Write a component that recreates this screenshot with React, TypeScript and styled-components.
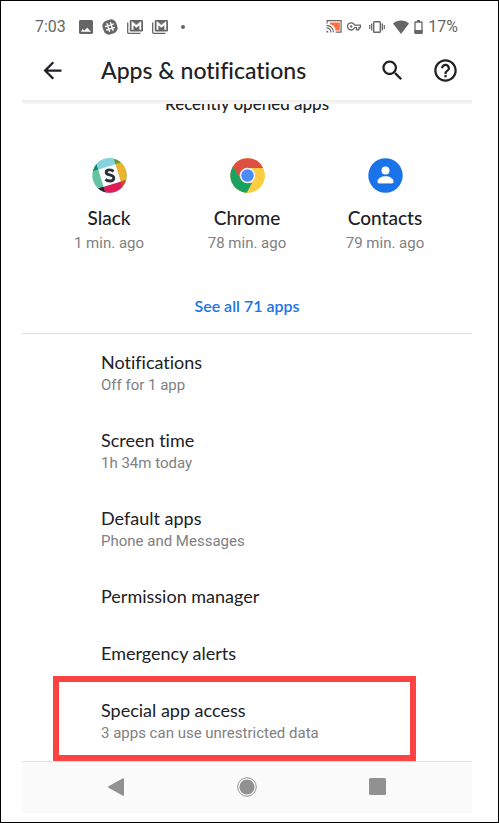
import React from "react";
import styled, { createGlobalStyle } from "styled-components";

const GlobalStyle = createGlobalStyle`
  * { box-sizing: border-box; }
  body { margin: 0; background: #fff; }
  button { border: 0; background: none; padding: 0; font: inherit; color: inherit; cursor: pointer; }
  svg { display: block; flex: none; }
`;

const display = `"Lato", sans-serif`;
const text = `"Roboto", sans-serif`;

const Frame = styled.div`
  min-height: 100vh;
  border: 1px solid #000;
  padding: 8px 26px 9px 21px;
  display: flex;
  flex-direction: column;
  color: #202124;
  font-family: ${display};
  font-variant-ligatures: none;
`;

const StatusBar = styled.div`
  height: 35px;
  padding: 0 14px 0 13px;
  display: flex;
  align-items: center;
  justify-content: space-between;
  color: #666;
  font-family: ${text};
  font-size: 16px;
  line-height: 20px;
`;

const StatusGroup = styled.div<{ $gap: number }>`
  display: flex;
  align-items: center;
  gap: ${(p) => p.$gap}px;
`;

const Clock = styled.span`
  margin-right: 4px;
`;

const Spaced = styled.span`
  margin: 0 3px;
`;

const Dot = styled.span`
  width: 4px;
  height: 4px;
  margin-left: 4px;
  border-radius: 50%;
  background: #666;
`;

const TopBar = styled.header`
  height: 58px;
  padding: 0 13px 4px 17px;
  display: flex;
  align-items: center;
  border-bottom: 2px solid #efefef;
`;

const Title = styled.h1`
  flex: 1;
  margin: 0 0 0 35px;
  font-size: 23px;
  line-height: 28px;
  font-weight: 500;
`;

const Actions = styled.div`
  display: flex;
  align-items: center;
  gap: 26px;
`;

const Recent = styled.section`
  border-top: 2px solid #f7f7f7;
  border-bottom: 1px solid #dadce0;
  overflow: hidden;
`;

const RecentTitle = styled.h2`
  margin: -10px 0 0;
  text-align: center;
  font-size: 17px;
  line-height: 20px;
  font-weight: 500;
`;

const AppGrid = styled.div`
  padding: 44px 18px 0;
  display: grid;
  grid-template-columns: repeat(3, 1fr);
`;

const AppTile = styled.button`
  display: flex;
  flex-direction: column;
  align-items: center;
`;

const AppName = styled.span`
  margin-top: 13px;
  font-size: 19px;
  line-height: 24px;
  font-weight: 500;
`;

const Muted = styled.span`
  font-family: ${text};
  font-size: 15px;
  line-height: 20px;
  color: #808080;
`;

const AppAge = styled(Muted)`
  margin-top: 3px;
`;

const SeeAll = styled.a`
  display: block;
  width: max-content;
  margin: 43px auto 17px;
  color: #1a73e8;
  font-size: 16px;
  line-height: 20px;
  font-weight: 600;
  text-decoration: none;
`;

const List = styled.ul`
  flex: 1;
  margin: 0;
  padding: 0;
  list-style: none;
`;

const Item = styled.li`
  position: relative;
`;

const Row = styled.button<{ $single: boolean }>`
  width: 100%;
  min-height: ${(p) => (p.$single ? 57 : 78)}px;
  padding: 0 16px 1px 79px;
  display: flex;
  flex-direction: column;
  justify-content: center;
  gap: 1px;
  text-align: left;
`;

const RowTitle = styled.span`
  font-size: 18px;
  line-height: 24px;
`;

const Highlight = styled.div`
  position: absolute;
  inset: -6px 56px -1px 31px;
  border: 6px solid #fe4343;
  pointer-events: none;
`;

const NavBar = styled.nav`
  height: 52px;
  padding: 0 29px 2px;
  display: grid;
  grid-template-columns: repeat(3, 1fr);
  border-top: 1px solid #e0e0e0;
  background: #fbfbfb;
  color: #919191;
`;

const NavButton = styled.button`
  display: flex;
  align-items: center;
  justify-content: center;
`;

const Icon = ({ d, w, h = w, box = "0 0 24 24" }: { d: string; w: number; h?: number; box?: string }) => (
  <svg width={w} height={h} viewBox={box} fill="currentColor" aria-hidden="true">
    <path d={d} />
  </svg>
);

const ImageIcon = () => (
  <Icon
    w={14}
    box="3 3 18 18"
    d="M21 19V5c0-1.1-.9-2-2-2H5c-1.1 0-2 .9-2 2v14c0 1.1.9 2 2 2h14c1.1 0 2-.9 2-2zM7.500 14.500l2.500 2 3.500-3.500 5 5H5.500z"
  />
);

const HashIcon = () => (
  <svg width="16" height="16" viewBox="0 0 16 16" aria-hidden="true">
    <g transform="rotate(-18 8 8)">
      <rect x=".8" y=".8" width="14.400" height="14.400" rx="5.500" fill="#666" />
      <path d="M6.200 4v8M9.800 4v8M4 6.200h8M4 9.800h8" stroke="#fff" strokeWidth="1.400" strokeLinecap="round" />
    </g>
  </svg>
);

const MailStackIcon = () => (
  <svg width="16" height="14" viewBox="0 0 16 14" fill="none" aria-hidden="true">
    <path d="M.700 2.500v9.800q0 1 1 1h11.800" stroke="#666" strokeWidth="1.300" />
    <rect x="2.800" y="0" width="13.200" height="11.500" rx="1.200" fill="#666" />
    <path d="M5.500 9.800V3.200l3.900 3.200 3.900-3.200v6.600" stroke="#fff" strokeWidth="1.900" />
    <path d="M5 1.500l4.400 3.200 4.400-3.200" stroke="#fff" strokeWidth=".5" />
  </svg>
);

const CastIcon = () => (
  <svg width="16" height="13" viewBox="0 0 16 13" fill="none" aria-hidden="true">
    <path d="M4 2.500h9.800v8H9.500C9.300 7 7.500 4.800 4 4.200V2.500z" fill="#ff6e40" />
    <path d="M1.100 3.400V.700h14v11.400H9.700" stroke="#666" strokeWidth="1.200" />
    <path d="M.500 5.300a7 7 0 0 1 7 7M.500 7.900a4.500 4.500 0 0 1 4.500 4.500" stroke="#666" strokeWidth="1.200" />
    <path d="M.500 10.400a2 2 0 0 1 2 2h-2z" fill="#666" />
  </svg>
);

const KeyIcon = () => (
  <svg width="14" height="9" viewBox="0 0 14 9" fill="none" stroke="#666" aria-hidden="true">
    <path d="M7.500 3.100h5.900v2.600h-1.500v2.100H9.500V5.700h-2A3.600 3.600 0 1 1 7.500 3.100z" strokeWidth="1.300" strokeLinejoin="round" />
    <circle cx="4.200" cy="4.400" r="1.200" fill="#666" stroke="none" />
  </svg>
);

const VibrateIcon = () => (
  <svg width="16" height="12" viewBox="0 0 16 12" fill="none" stroke="#666" aria-hidden="true">
    <rect x="4.700" y=".7" width="6.600" height="10.600" rx=".8" strokeWidth="1.400" />
    <path d="M2.700 2.500v7M13.300 2.500v7" strokeWidth="1.300" />
    <path d="M.700 4v4M15.300 4v4" strokeWidth="1.200" />
  </svg>
);

const WifiIcon = () => <Icon w={16} h={14} box="0 0 16 14" d="M8 14 0 3.400C2.200 1.500 5 .500 8 .500s5.800 1 8 2.900z" />;

const BatteryIcon = () => (
  <svg width="9" height="14" viewBox="0 0 9 14" aria-hidden="true">
    <path d="M3 0h3v2H3zM.500 10h8v3.500h-8z" fill="#666" />
    <rect x="1" y="2" width="7" height="11.300" rx=".6" fill="none" stroke="#666" strokeWidth="1.300" />
  </svg>
);

const SlackLogo = () => (
  <svg width="35" height="35" viewBox="0 0 35 35" aria-hidden="true">
    <defs>
      <clipPath id="slack-disc"><circle cx="17.500" cy="17.500" r="17.200" /></clipPath>
    </defs>
    <g clipPath="url(#slack-disc)">
      <rect width="35" height="35" fill="#65c3a2" />
      <g transform="rotate(-17 17.500 17.500)">
        <rect x="-5" y="-5" width="13.500" height="13.500" fill="#158a74" />
        <rect x="8.500" y="-5" width="18" height="13.500" fill="#85d3e0" />
        <rect x="26.500" y="-5" width="14" height="13.500" fill="#71982f" />
        <rect x="26.500" y="8.500" width="14" height="18" fill="#edb42b" />
        <rect x="26.500" y="26.500" width="14" height="14" fill="#d7432a" />
        <rect x="8.500" y="26.500" width="18" height="14" fill="#e21b5a" />
        <rect x="-5" y="26.500" width="13.500" height="14" fill="#351737" />
        <rect x="8.500" y="8.500" width="18" height="18" fill="#fff" />
      </g>
    </g>
    <path
      d="M21.600 13.300c-1.200-1-2.500-1.400-4-1.400-2 0-3.400.9-3.400 2.500 0 3.500 7.600 1.500 7.600 5.600 0 1.900-1.700 3-3.900 3-1.700 0-3.200-.5-4.400-1.600"
      fill="none"
      stroke="#2b303b"
      strokeWidth="2.900"
    />
  </svg>
);

const ChromeLogo = () => (
  <svg width="35" height="35" viewBox="0 0 35 35" aria-hidden="true">
    <circle cx="17.500" cy="17.500" r="17.200" fill="#fccd42" />
    <path d="M2.600 8.900A17.200 17.200 0 0 1 33 9.900H17.500l-6.600 11.400z" fill="#dc4f41" />
    <path d="M2.900 8.500 10.900 21.300 17.500 25.100h6.600L16.800 34.700A17.200 17.200 0 0 1 2.900 8.500z" fill="#1ba160" />
    <path d="M17.500 9.900H33A17.200 17.200 0 0 1 16.700 34.700L24.100 21.300z" fill="#fccd42" />
    <circle cx="17.500" cy="17.500" r="7.800" fill="#f1f1f1" />
    <circle cx="17.500" cy="17.500" r="6.200" fill="#4c8bf5" />
  </svg>
);

const ContactsLogo = () => (
  <svg width="35" height="35" viewBox="0 0 35 35" aria-hidden="true">
    <circle cx="17.500" cy="17.500" r="17.200" fill="#1a73e8" />
    <circle cx="17.500" cy="12.500" r="4" fill="#fff" />
    <path d="M9.500 26.300v-2.500c0-3 4-5.200 8-5.200s8 2.200 8 5.200v2.500z" fill="#155cba" />
    <path d="M9.500 23.300c0-3 4-5.100 8-5.100s8 2.100 8 5.100v1c0 .7-.5 1.200-1.200 1.200H10.700c-.7 0-1.200-.5-1.200-1.200z" fill="#fff" />
  </svg>
);

const apps = [
  { name: "Slack", age: "1 min. ago", Logo: SlackLogo },
  { name: "Chrome", age: "78 min. ago", Logo: ChromeLogo },
  { name: "Contacts", age: "79 min. ago", Logo: ContactsLogo },
];

const settings: { title: string; detail?: string; marked?: boolean }[] = [
  { title: "Notifications", detail: "Off for 1 app" },
  { title: "Screen time", detail: "1h 34m today" },
  { title: "Default apps", detail: "Phone and Messages" },
  { title: "Permission manager" },
  { title: "Emergency alerts" },
  { title: "Special app access", detail: "3 apps can use unrestricted data", marked: true },
];

export default function App() {
  return (
    <Frame>
      <GlobalStyle />
      <StatusBar>
        <StatusGroup $gap={9}>
          <Clock>7:03</Clock>
          <ImageIcon />
          <HashIcon />
          <MailStackIcon />
          <MailStackIcon />
          <Dot />
        </StatusGroup>
        <StatusGroup $gap={5}>
          <CastIcon />
          <KeyIcon />
          <Spaced>
            <VibrateIcon />
          </Spaced>
          <WifiIcon />
          <BatteryIcon />
          <span>17%</span>
        </StatusGroup>
      </StatusBar>
      <TopBar>
        <button aria-label="Back">
          <Icon w={27} d="M20 11H7.830l5.590-5.590L12 4l-8 8 8 8 1.410-1.410L7.830 13H20v-2z" />
        </button>
        <Title>Apps &amp; notifications</Title>
        <Actions>
          <button aria-label="Search">
            <Icon
              w={27}
              d="M15.500 14h-.79l-.28-.27C15.410 12.590 16 11.110 16 9.500 16 5.910 13.090 3 9.500 3S3 5.910 3 9.500 5.910 16 9.500 16c1.610 0 3.090-.59 4.230-1.570l.27.28v.79l5 4.990L20.490 19l-4.990-5zm-6 0C7.010 14 5 11.990 5 9.500S7.010 5 9.500 5 14 7.010 14 9.500 11.990 14 9.500 14z"
            />
          </button>
          <button aria-label="Help">
            <Icon
              w={27}
              d="M11 18h2v-2h-2v2zm1-16C6.480 2 2 6.480 2 12s4.480 10 10 10 10-4.480 10-10S17.520 2 12 2zm0 18c-4.410 0-8-3.590-8-8s3.590-8 8-8 8 3.590 8 8-3.590 8-8 8zm0-14c-2.210 0-4 1.790-4 4h2c0-1.100.9-2 2-2s2 .9 2 2c0 2-3 1.750-3 5h2c0-2.250 3-2.500 3-5 0-2.210-1.790-4-4-4z"
            />
          </button>
        </Actions>
      </TopBar>
      <Recent>
        <RecentTitle>Recently opened apps</RecentTitle>
        <AppGrid>
          {apps.map(({ name, age, Logo }) => (
            <AppTile key={name}>
              <Logo />
              <AppName>{name}</AppName>
              <AppAge>{age}</AppAge>
            </AppTile>
          ))}
        </AppGrid>
        <SeeAll href="#all-apps">See all 71 apps</SeeAll>
      </Recent>
      <List>
        {settings.map(({ title, detail, marked }) => (
          <Item key={title}>
            <Row $single={!detail}>
              <RowTitle>{title}</RowTitle>
              {detail && <Muted>{detail}</Muted>}
            </Row>
            {marked && <Highlight />}
          </Item>
        ))}
      </List>
      <NavBar aria-label="System">
        <NavButton aria-label="Back">
          <Icon w={18} d="M17 1v16a1 1 0 0 1-1.500.6L1.500 9.700a.8.8 0 0 1 0-1.400L15.500.400A1 1 0 0 1 17 1z" box="0 0 18 18" />
        </NavButton>
        <NavButton aria-label="Home">
          <svg width="20" height="20" viewBox="0 0 20 20" aria-hidden="true">
            <circle cx="10" cy="10" r="9.300" fill="none" stroke="currentColor" />
            <circle cx="10" cy="10" r="7.600" fill="currentColor" />
          </svg>
        </NavButton>
        <NavButton aria-label="Recent apps">
          <Icon w={17} d="M1.500 0h14A1.500 1.500 0 0 1 17 1.500v14a1.500 1.500 0 0 1-1.500 1.500h-14A1.500 1.500 0 0 1 0 15.500v-14A1.500 1.500 0 0 1 1.500 0z" box="0 0 17 17" />
        </NavButton>
      </NavBar>
    </Frame>
  );
}
